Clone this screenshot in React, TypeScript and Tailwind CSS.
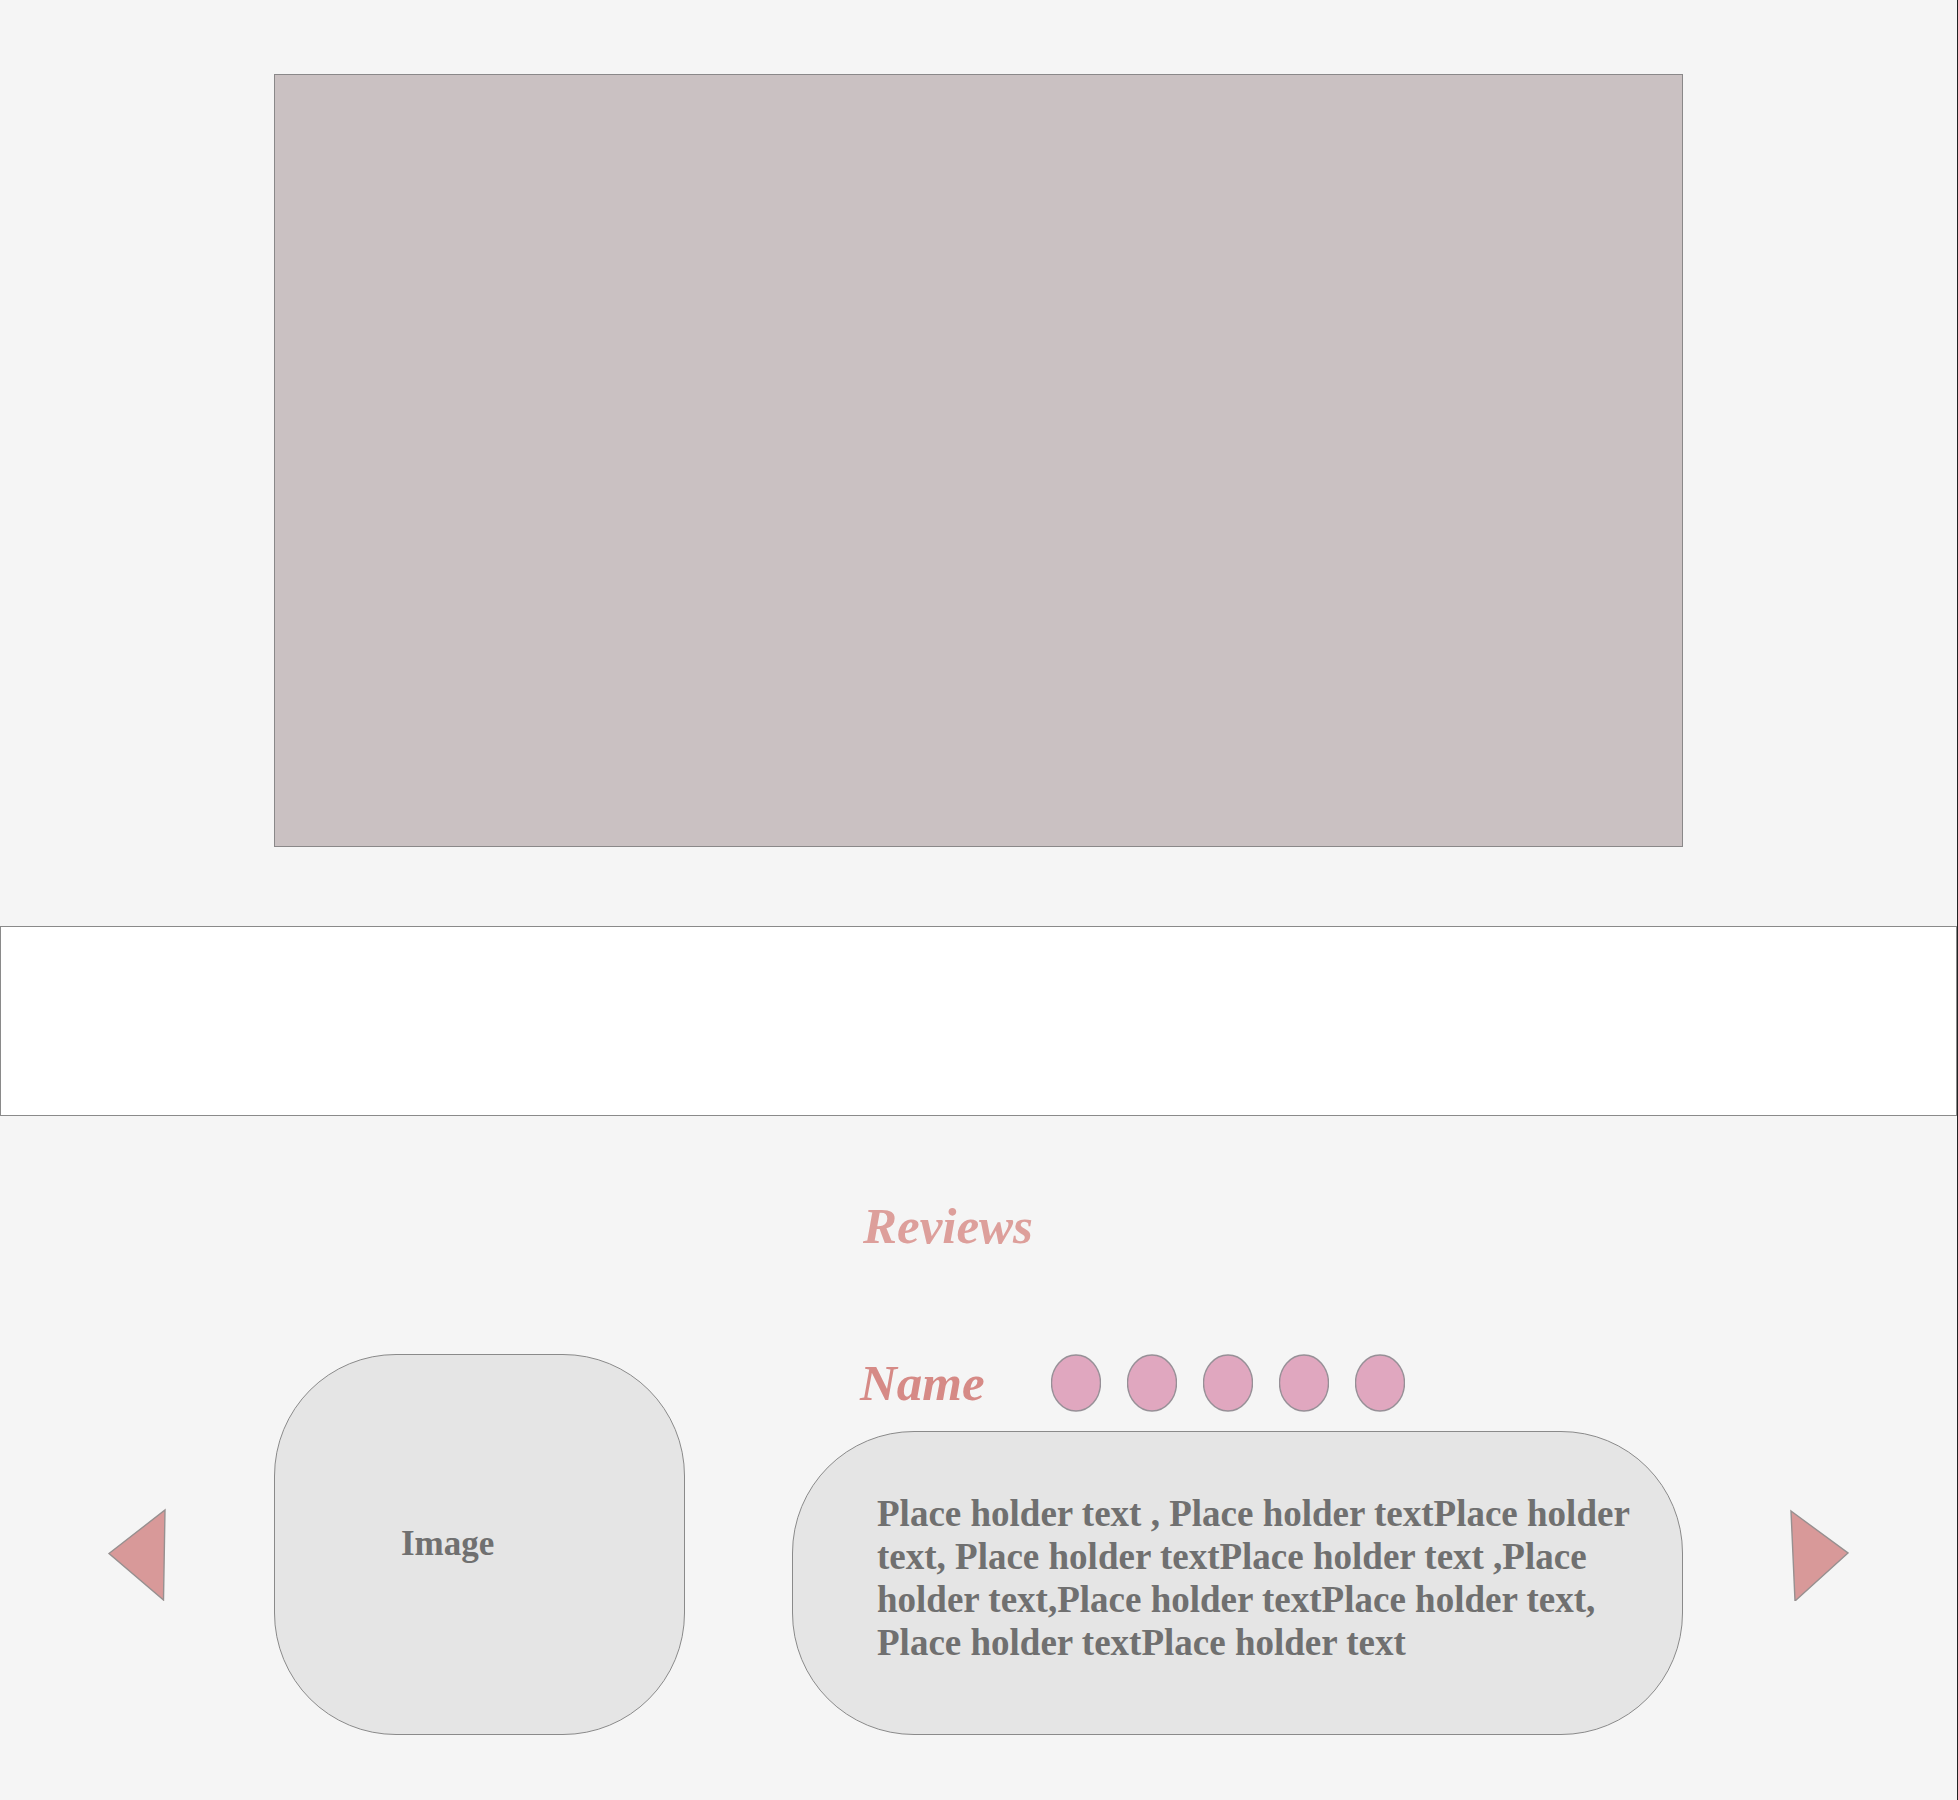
const RATING = 5;

type ArrowProps = { label: string; points: string };

function ArrowButton({ label, points }: ArrowProps) {
  return (
    <button type="button" aria-label={label} className="block cursor-pointer">
      <svg width="60" height="93" viewBox="0 0 60 93" aria-hidden="true">
        <polygon points={points} fill="#d89999" stroke="#979090" strokeWidth="1.4" />
      </svg>
    </button>
  );
}

function Rating() {
  return (
    <div role="img" aria-label="5 out of 5" className="flex gap-[26px]">
      {Array.from({ length: RATING }, (_, i) => (
        <svg key={i} width="50" height="58" viewBox="0 0 50 58" aria-hidden="true">
          <ellipse cx="25" cy="29" rx="24.5" ry="28" fill="#e0a7bf" stroke="#979097" strokeWidth="1.4" />
        </svg>
      ))}
    </div>
  );
}

function Reviews() {
  return (
    <section className="grid grid-cols-[274fr_411fr_107fr_891fr_274fr] pt-20 pb-[63px]">
      <h2 className="col-start-4 mb-[98px] pl-[71px] text-[51px] leading-[60px] font-bold italic text-[#dd9f9b]">
        Reviews
      </h2>

      <div className="col-start-1 row-start-2 flex items-center justify-end pt-5 pr-[107px]">
        <ArrowButton label="Previous review" points="2,45.5 58,2 56.5,92" />
      </div>

      <div className="col-start-2 row-start-2 flex items-center rounded-[122px] border border-[#8a8a8a] bg-[#e5e5e5] pb-0.5 pl-[126px]">
        <span className="text-[35px] leading-[43px] font-bold text-[#707070]">Image</span>
      </div>

      <article className="col-start-4 row-start-2">
        <header className="flex items-center pl-[68px]">
          <h3 className="w-[191px] text-[51px] leading-[58px] font-bold italic text-[#d68a86]">Name</h3>
          <Rating />
        </header>
        <div className="mt-[19px] rounded-[122px] border border-[#8a8a8a] bg-[#e5e5e5] pt-[60px] pr-10 pb-[70px] pl-[84px]">
          <p className="text-[37px] leading-[43px] font-bold text-[#707070]">
            Place holder text , Place holder textPlace holder text, Place holder textPlace holder text
            ,Place holder text,Place holder textPlace holder text, Place holder textPlace holder text
          </p>
        </div>
      </article>

      <div className="col-start-5 row-start-2 flex items-center pt-5 pl-[106px]">
        <ArrowButton label="Next review" points="2,3 59,45 6,93" />
      </div>
    </section>
  );
}

export default function App() {
  return (
    <main className="min-h-screen border-r border-[#222222] bg-[#f5f5f5] font-['Liberation_Serif',serif]">
      <section className="pt-[74px] pb-[79px]">
        <div className="mx-auto aspect-[1410/774] w-[72%] border border-[#8a8889] bg-[#cac1c2]" />
      </section>
      <div className="h-[190px] border border-[#8a8a8a] bg-white" />
      <Reviews />
    </main>
  );
}
